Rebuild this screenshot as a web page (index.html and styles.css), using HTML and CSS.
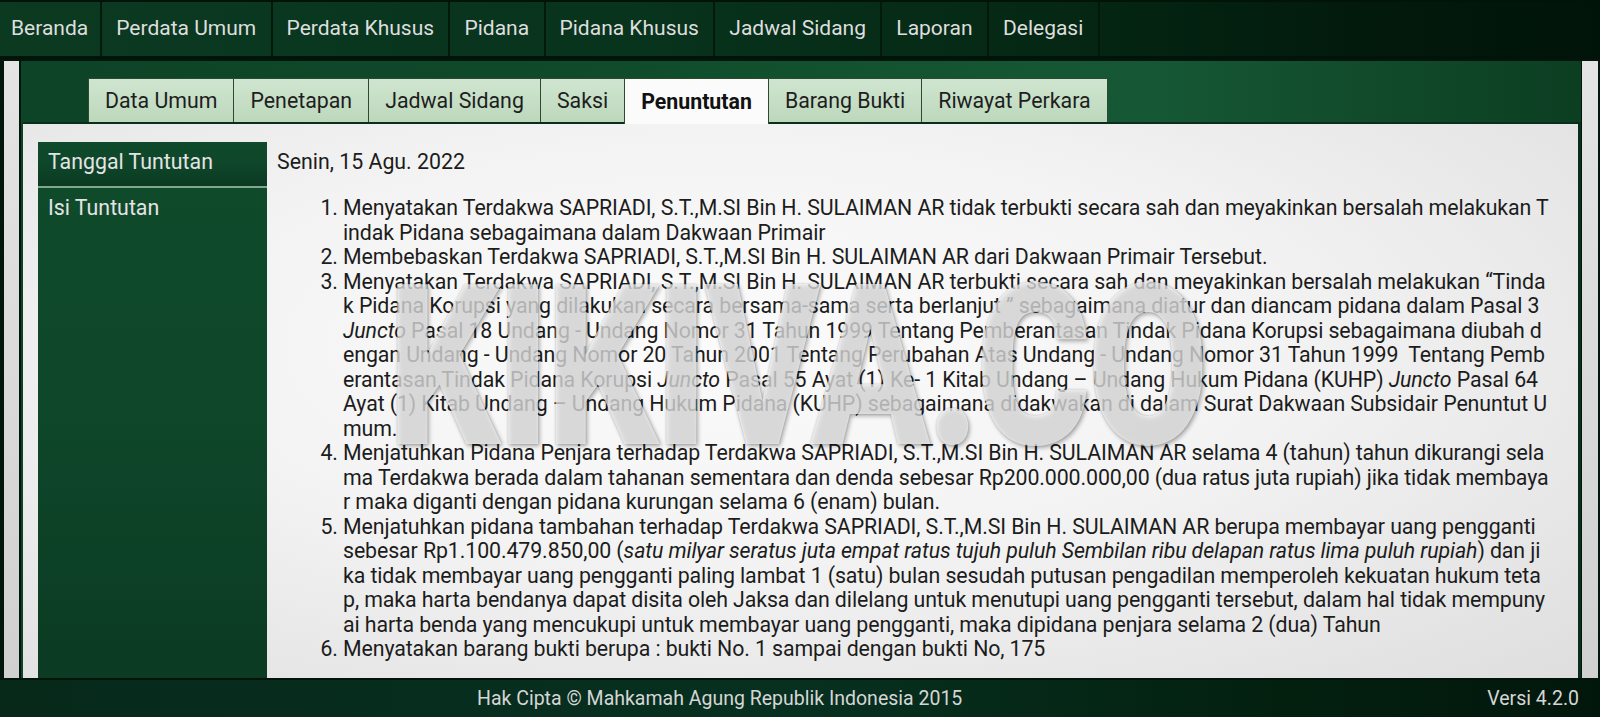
FILE: index.html
```html
<!DOCTYPE html>
<html lang="id">
<head>
<meta charset="utf-8">
<title>Penuntutan</title>
<link rel="stylesheet" href="styles.css">
</head>
<body>
<nav class="topnav">
  <a class="nav-item">Beranda</a>
  <a class="nav-item">Perdata Umum</a>
  <a class="nav-item">Perdata Khusus</a>
  <a class="nav-item">Pidana</a>
  <a class="nav-item">Pidana Khusus</a>
  <a class="nav-item">Jadwal Sidang</a>
  <a class="nav-item">Laporan</a>
  <a class="nav-item">Delegasi</a>
</nav>
<div class="frame">
  <div class="strip strip-left"></div>
  <main class="panel">
    <div class="tabs">
      <span class="tab">Data Umum</span>
      <span class="tab">Penetapan</span>
      <span class="tab">Jadwal Sidang</span>
      <span class="tab">Saksi</span>
      <span class="tab tab-active">Penuntutan</span>
      <span class="tab">Barang Bukti</span>
      <span class="tab">Riwayat Perkara</span>
    </div>
    <div class="content">
      <div class="detail">
        <div class="label label-first">Tanggal Tuntutan</div>
        <div class="value value-date">Senin, 15 Agu. 2022</div>
        <div class="label">Isi Tuntutan</div>
        <div class="value">
          <ol class="items">
            <li>Menyatakan Terdakwa SAPRIADI, S.T.,M.SI Bin H. SULAIMAN AR tidak terbukti secara sah dan meyakinkan bersalah melakukan T<br>indak Pidana sebagaimana dalam Dakwaan Primair</li>
            <li>Membebaskan Terdakwa SAPRIADI, S.T.,M.SI Bin H. SULAIMAN AR dari Dakwaan Primair Tersebut.</li>
            <li>Menyatakan Terdakwa SAPRIADI, S.T.,M.SI Bin H. SULAIMAN AR terbukti secara sah dan meyakinkan bersalah melakukan “Tinda<br>k Pidana Korupsi yang dilakukan secara bersama-sama serta berlanjut ” sebagaimana diatur dan diancam pidana dalam Pasal 3<br><i>Juncto</i> Pasal 18 Undang - Undang Nomor 31 Tahun 1999 Tentang Pemberantasan Tindak Pidana Korupsi sebagaimana diubah d<br>engan Undang - Undang Nomor 20 Tahun 2001 Tentang Perubahan Atas Undang - Undang Nomor 31 Tahun 1999&nbsp; Tentang Pemb<br>erantasan Tindak Pidana Korupsi <i>Juncto</i> Pasal 55 Ayat (1) Ke- 1 Kitab Undang – Undang Hukum Pidana (KUHP) <i>Juncto</i> Pasal 64<br>Ayat (1) Kitab Undang – Undang Hukum Pidana (KUHP) sebagaimana didakwakan di dalam Surat Dakwaan Subsidair Penuntut U<br>mum.</li>
            <li>Menjatuhkan Pidana Penjara terhadap Terdakwa SAPRIADI, S.T.,M.SI Bin H. SULAIMAN AR selama 4 (tahun) tahun dikurangi sela<br>ma Terdakwa berada dalam tahanan sementara dan denda sebesar Rp200.000.000,00 (dua ratus juta rupiah) jika tidak membaya<br>r maka diganti dengan pidana kurungan selama 6 (enam) bulan.</li>
            <li>Menjatuhkan pidana tambahan terhadap Terdakwa SAPRIADI, S.T.,M.SI Bin H. SULAIMAN AR berupa membayar uang pengganti<br>sebesar Rp1.100.479.850,00 (<i>satu milyar seratus juta empat ratus tujuh puluh Sembilan ribu delapan ratus lima puluh rupiah</i>) dan ji<br>ka tidak membayar uang pengganti paling lambat 1 (satu) bulan sesudah putusan pengadilan memperoleh kekuatan hukum teta<br>p, maka harta bendanya dapat disita oleh Jaksa dan dilelang untuk menutupi uang pengganti tersebut, dalam hal tidak mempuny<br>ai harta benda yang mencukupi untuk membayar uang pengganti, maka dipidana penjara selama 2 (dua) Tahun</li>
            <li>Menyatakan barang bukti berupa : bukti No. 1 sampai dengan bukti No, 175</li>
          </ol>
        </div>
      </div>
    </div>
  </main>
  <div class="strip strip-right"></div>
</div>
<footer class="footer">
  <span class="copyright">Hak Cipta © Mahkamah Agung Republik Indonesia 2015</span>
  <span class="version">Versi 4.2.0</span>
</footer>
<div class="watermark">KIKIVA.CO</div>
</body>
</html>
```

FILE: styles.css
```css
html, body {
  margin: 0;
  padding: 0;
}
body {
  width: 1600px;
  height: 717px;
  overflow: hidden;
  background: #03160c;
  font-family: Roboto, "Noto Sans", sans-serif;
  display: flex;
  flex-direction: column;
  position: relative;
}

/* top navigation */
.topnav {
  flex: 0 0 59px;
  display: flex;
  align-items: stretch;
  background: linear-gradient(90deg, #0b3a21 0%, #08331d 40%, #052814 65%, #021a0c 85%, #01140a 100%);
  border-top: 2px solid #021409;
  border-bottom: 3px solid #021409;
  box-sizing: border-box;
}
.nav-item {
  display: flex;
  align-items: center;
  padding: 0 14.4px 2px 14px;
  color: #dedede;
  font-size: 21px;
  border-right: 2px solid #03190d;
}
.nav-item:first-child {
  padding-left: 11px;
  padding-right: 12px;
}

/* frame with side strips */
.frame {
  flex: 1 1 auto;
  display: flex;
  padding-top: 2px;
  min-height: 0;
}
.strip {
  flex: 0 0 15px;
  background: linear-gradient(180deg, #e4e4e4, #d0d0d0);
}
.strip-left {
  margin: 0 2px 0 4px;
}
.strip-right {
  flex-basis: 16px;
  margin: 0 2px 0 1px;
}

.panel {
  flex: 1 1 auto;
  display: flex;
  flex-direction: column;
  background: linear-gradient(90deg, #0d4326 0%, #0f4a2b 35%, #13532f 55%, #165836 72%, #0c3e22 100%);
  padding: 17px 0 0 2px;
  min-width: 0;
}

/* tabs */
.tabs {
  display: flex;
  padding-left: 65px;
  height: 44px;
  border-bottom: 2px solid #0a2e19;
}
.tab {
  display: flex;
  align-items: center;
  padding: 0 16px;
  font-size: 21.33px;
  color: #1e1e1e;
  background: linear-gradient(180deg, #d0e5d0 0%, #bcd8bc 100%);
  border: 1px solid #2b4a30;
  border-bottom: none;
  margin-right: -1px;
}
.tab-active {
  background: #fbfbfb;
  font-weight: bold;
  color: #111;
  margin-bottom: -2px;
}

/* content */
.content {
  flex: 1 1 auto;
  background: radial-gradient(ellipse at 45% 40%, #fbfbfb 0%, #f3f3f3 45%, #dedede 100%);
  border-right: 3px solid #0b2e1a;
  padding: 18px 10px 0 15px;
  min-height: 0;
}
.detail {
  display: grid;
  grid-template-columns: 229px 1fr;
  grid-template-rows: auto 1fr;
  height: 100%;
}
.label {
  background: linear-gradient(180deg, #0f4a2b 0%, #0e462a 50%, #0b3b22 100%);
  color: #e4e4e4;
  font-size: 21.33px;
  line-height: 24.5px;
  padding: 8px 10px 0 10px;
}
.label-first {
  height: 46px;
  box-sizing: border-box;
  border-bottom: 2px solid #7fa78e;
}
.value {
  color: #1c1c1c;
  font-size: 21.33px;
  line-height: 24.5px;
  padding: 8px 0 0 10px;
  min-width: 0;
}
.value-date {
  height: 46px;
  box-sizing: border-box;
}
.items {
  margin: 0;
  padding: 0 0 0 66px;
  line-height: 24.5px;
  white-space: nowrap;
  letter-spacing: -0.1px;
}

/* footer */
.footer {
  flex: 0 0 39px;
  display: flex;
  align-items: center;
  justify-content: space-between;
  padding: 0 21px 0 477px;
  background: linear-gradient(90deg, #06291a 0%, #073020 50%, #03200f 80%, #02170c 100%);
  border-top: 2px solid #021409;
  color: #d6d6d6;
  font-size: 19.5px;
  box-sizing: border-box;
}

/* watermark overlay */
.watermark {
  position: absolute;
  left: 388px;
  top: 256px;
  font-size: 224px;
  font-weight: 900;
  letter-spacing: -4px;
  color: rgba(255, 255, 255, 0.68);
  text-shadow: 2px 2px 5px rgba(0, 0, 0, 0.32), 0 0 2px rgba(0, 0, 0, 0.2);
  transform: scaleX(0.78);
  transform-origin: left top;
  pointer-events: none;
  line-height: 1;
}
```
